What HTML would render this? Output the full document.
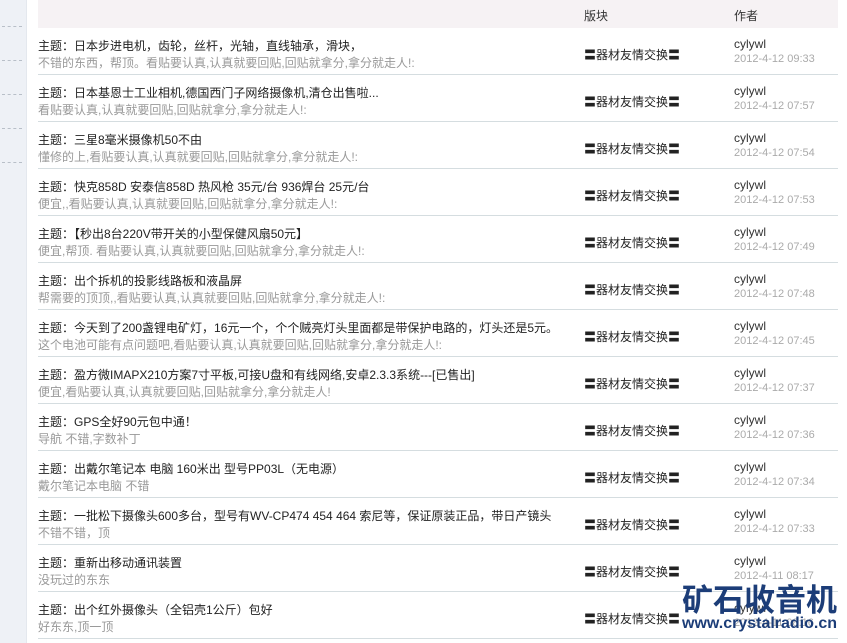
<!DOCTYPE html>
<html><head><meta charset="utf-8"><style>
*{margin:0;padding:0;box-sizing:border-box}
body{width:847px;height:643px;overflow:hidden;background:#fff;font-family:"Liberation Sans","Noto Sans CJK SC",sans-serif;font-size:12px;position:relative}
.side{position:absolute;left:0;top:0;width:27px;height:643px;background:#eef1f6;border-right:1px solid #e4e8ee}
.dash{position:absolute;left:2px;width:20px;border-top:1px dashed #b8bfc8}
.head{position:absolute;left:38px;top:0;width:800px;height:28px;background:#f6f2f4}
.head span{position:absolute;top:7px;color:#333}
.row{position:absolute;left:38px;width:800px;height:47px;border-bottom:1px solid #d5dde0}
.t{position:absolute;left:0;top:9px;color:#222;white-space:nowrap}
.s{position:absolute;left:0;top:26px;color:#999;white-space:nowrap}
.f{position:absolute;left:546px;top:18px;color:#222}
.a{position:absolute;left:696px;top:9px;color:#333}
.d{position:absolute;left:696px;top:25px;color:#aaa;font-size:11px}
.wm{position:absolute;left:682px;top:580px;color:#1c3d78;font-weight:bold;font-size:31px;line-height:36px;font-family:"Noto Sans CJK SC",sans-serif;white-space:nowrap}
.wm2{position:absolute;left:682px;top:614px;color:#1c3d78;font-weight:bold;font-size:16px;line-height:20px;font-family:"Liberation Sans",sans-serif;white-space:nowrap}
</style></head><body>
<div class="side"></div>
<div class="dash" style="top:26px"></div><div class="dash" style="top:60px"></div><div class="dash" style="top:94px"></div><div class="dash" style="top:128px"></div><div class="dash" style="top:162px"></div>
<div class="head"><span style="left:546px">版块</span><span style="left:696px">作者</span></div>

<div class="row" style="top:28px"><div class="t">主题：日本步进电机，齿轮，丝杆，光轴，直线轴承，滑块，</div><div class="s">不错的东西，帮顶。看贴要认真,认真就要回贴,回贴就拿分,拿分就走人!:</div><div class="f">〓器材友情交换〓</div><div class="a">cylywl</div><div class="d">2012-4-12 09:33</div></div>
<div class="row" style="top:75px"><div class="t">主题：日本基恩士工业相机,德国西门子网络摄像机,清仓出售啦...</div><div class="s">看贴要认真,认真就要回贴,回贴就拿分,拿分就走人!:</div><div class="f">〓器材友情交换〓</div><div class="a">cylywl</div><div class="d">2012-4-12 07:57</div></div>
<div class="row" style="top:122px"><div class="t">主题：三星8毫米摄像机50不由</div><div class="s">懂修的上,看贴要认真,认真就要回贴,回贴就拿分,拿分就走人!:</div><div class="f">〓器材友情交换〓</div><div class="a">cylywl</div><div class="d">2012-4-12 07:54</div></div>
<div class="row" style="top:169px"><div class="t">主题：快克858D 安泰信858D 热风枪 35元/台 936焊台 25元/台</div><div class="s">便宜,,看贴要认真,认真就要回贴,回贴就拿分,拿分就走人!:</div><div class="f">〓器材友情交换〓</div><div class="a">cylywl</div><div class="d">2012-4-12 07:53</div></div>
<div class="row" style="top:216px"><div class="t">主题：【秒出8台220V带开关的小型保健风扇50元】</div><div class="s">便宜,帮顶. 看贴要认真,认真就要回贴,回贴就拿分,拿分就走人!:</div><div class="f">〓器材友情交换〓</div><div class="a">cylywl</div><div class="d">2012-4-12 07:49</div></div>
<div class="row" style="top:263px"><div class="t">主题：出个拆机的投影线路板和液晶屏</div><div class="s">帮需要的顶顶,,看贴要认真,认真就要回贴,回贴就拿分,拿分就走人!:</div><div class="f">〓器材友情交换〓</div><div class="a">cylywl</div><div class="d">2012-4-12 07:48</div></div>
<div class="row" style="top:310px"><div class="t">主题：今天到了200盏锂电矿灯，16元一个，个个贼亮灯头里面都是带保护电路的，灯头还是5元。</div><div class="s">这个电池可能有点问题吧,看贴要认真,认真就要回贴,回贴就拿分,拿分就走人!:</div><div class="f">〓器材友情交换〓</div><div class="a">cylywl</div><div class="d">2012-4-12 07:45</div></div>
<div class="row" style="top:357px"><div class="t">主题：盈方微IMAPX210方案7寸平板,可接U盘和有线网络,安卓2.3.3系统---[已售出]</div><div class="s">便宜,看贴要认真,认真就要回贴,回贴就拿分,拿分就走人!</div><div class="f">〓器材友情交换〓</div><div class="a">cylywl</div><div class="d">2012-4-12 07:37</div></div>
<div class="row" style="top:404px"><div class="t">主题：GPS全好90元包中通！</div><div class="s">导航 不错,字数补丁</div><div class="f">〓器材友情交换〓</div><div class="a">cylywl</div><div class="d">2012-4-12 07:36</div></div>
<div class="row" style="top:451px"><div class="t">主题：出戴尔笔记本 电脑 160米出 型号PP03L（无电源）</div><div class="s">戴尔笔记本电脑 不错</div><div class="f">〓器材友情交换〓</div><div class="a">cylywl</div><div class="d">2012-4-12 07:34</div></div>
<div class="row" style="top:498px"><div class="t">主题：一批松下摄像头600多台，型号有WV-CP474 454 464 索尼等，保证原装正品，带日产镜头</div><div class="s">不错不错，顶</div><div class="f">〓器材友情交换〓</div><div class="a">cylywl</div><div class="d">2012-4-12 07:33</div></div>
<div class="row" style="top:545px"><div class="t">主题：重新出移动通讯装置</div><div class="s">没玩过的东东</div><div class="f">〓器材友情交换〓</div><div class="a">cylywl</div><div class="d">2012-4-11 08:17</div></div>
<div class="row" style="top:592px"><div class="t">主题：出个红外摄像头（全铝壳1公斤）包好</div><div class="s">好东东,顶一顶</div><div class="f">〓器材友情交换〓</div><div class="a">cylywl</div><div class="d">2012-4-11 08:16</div></div>
<div class="wm">矿石收音机</div>
<div class="wm2">www.crystalradio.cn</div>
</body></html>
